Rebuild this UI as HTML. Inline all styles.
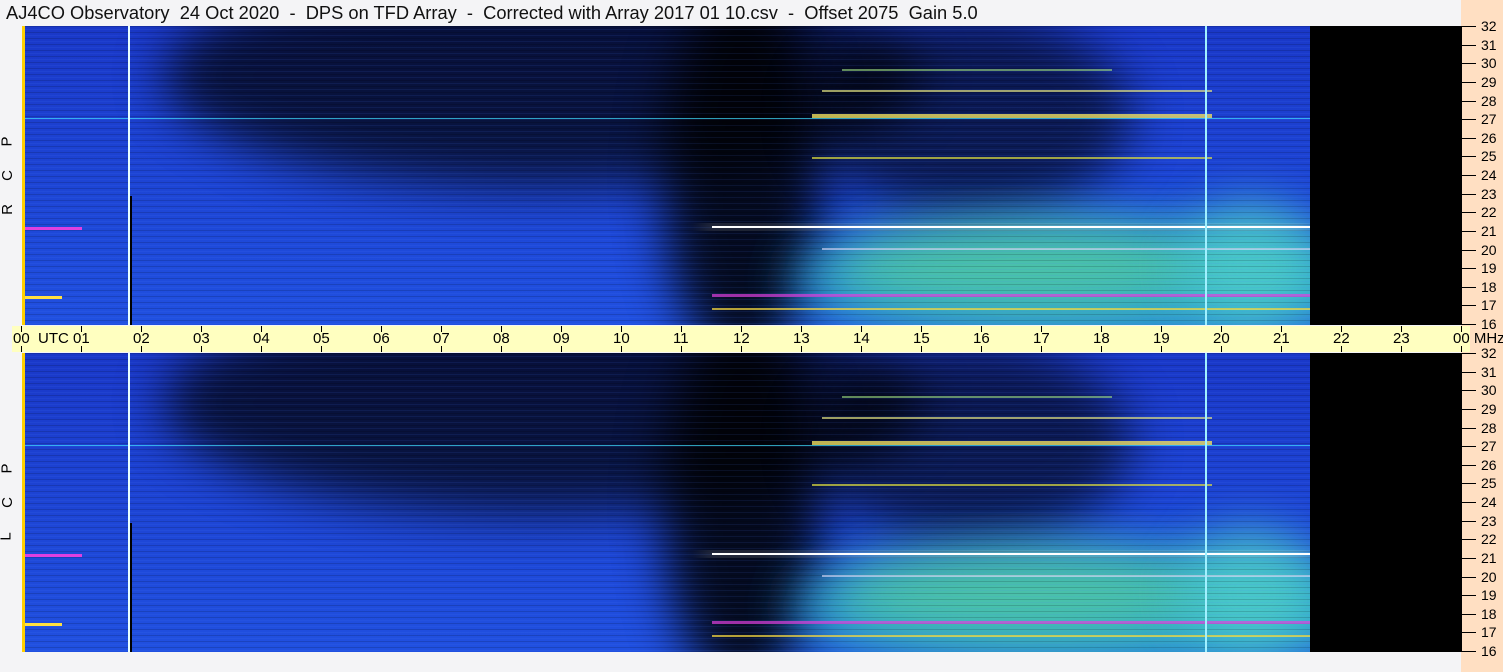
<!DOCTYPE html>
<html><head><meta charset="utf-8"><style>
body{margin:0;width:1503px;height:672px;background:#f4f4f6;position:relative;overflow:hidden;font-family:"Liberation Sans",sans-serif;}
.title{position:absolute;left:6px;top:2px;font-size:18.3px;color:#111;white-space:pre;}
.peach{position:absolute;left:1461px;top:0;width:42px;height:672px;background:#ffdfc2;}
.axis{position:absolute;left:12px;top:326px;width:1458px;height:26px;background:#ffffc0;}
.p{position:absolute;left:22px;width:1440px;height:299px;}
.lab{position:absolute;left:2px;font-size:15px;color:#000;transform:rotate(-90deg);}
.hl{position:absolute;font-size:15px;color:#000;top:330px;white-space:nowrap;}
.tk{position:absolute;width:1px;background:#000;}
.fl{position:absolute;left:1481px;font-size:14px;color:#000;}
.ft{position:absolute;left:1462px;width:14px;height:1px;background:#000;}
</style></head><body>
<div class="peach"></div>
<div class="title">AJ4CO Observatory  24 Oct 2020  -  DPS on TFD Array  -  Corrected with Array 2017 01 10.csv  -  Offset 2075  Gain 5.0</div>
<div class="axis"></div>
<svg width="0" height="0" style="position:absolute"><defs>
<filter id="b" x="-50%" y="-50%" width="200%" height="200%"><feGaussianBlur stdDeviation="25"/></filter>
<filter id="b2" x="-50%" y="-50%" width="200%" height="200%"><feGaussianBlur stdDeviation="8"/></filter>
<linearGradient id="g" x1="0" y1="0" x2="0" y2="1"><stop offset="0" stop-color="#1a38c8"/><stop offset="1" stop-color="#2050e0"/></linearGradient>
<pattern id="st" width="1440" height="6" patternUnits="userSpaceOnUse"><rect width="1440" height="1" fill="#000" opacity=".15"/><rect y="3" width="1440" height="1" fill="#5080ff" opacity=".1"/></pattern>
<symbol id="spec" viewBox="0 0 1440 299">
<rect width="1440" height="299" fill="url(#g)"/>
<ellipse cx="520" cy="50" rx="380" ry="110" fill="#000" opacity=".7" filter="url(#b)"/>
<ellipse cx="720" cy="150" rx="80" ry="190" fill="#000" opacity=".85" filter="url(#b)"/>
<ellipse cx="950" cy="90" rx="160" ry="100" fill="#000" opacity=".6" filter="url(#b)"/>
<ellipse cx="1070" cy="255" rx="300" ry="60" fill="#30b8c8" opacity=".85" filter="url(#b)"/>
<ellipse cx="1000" cy="240" rx="190" ry="40" fill="#60d890" opacity=".6" filter="url(#b)"/>
<ellipse cx="1230" cy="240" rx="70" ry="60" fill="#50d0c8" opacity=".8" filter="url(#b)"/>
<rect width="1440" height="299" fill="url(#st)"/>
<rect x="680" y="199" width="610" height="4" fill="#fff" filter="url(#b2)" opacity=".6"/>
<rect x="690" y="200" width="600" height="2" fill="#fff"/>
<rect x="0" y="201" width="60" height="3" fill="#e040e0"/>
<rect x="790" y="88" width="400" height="4" fill="#f0e060" opacity=".8"/>
<rect x="0" y="92" width="1288" height="1" fill="#40e0ff" opacity=".7"/>
<rect x="800" y="64" width="390" height="2" fill="#e0e080" opacity=".7"/>
<rect x="820" y="43" width="270" height="2" fill="#a0e080" opacity=".6"/>
<rect x="790" y="131" width="400" height="2" fill="#e0e040" opacity=".7"/>
<rect x="690" y="268" width="600" height="3" fill="#e040e0" opacity=".7"/>
<rect x="690" y="282" width="600" height="2" fill="#ffe040" opacity=".7"/>
<rect x="0" y="270" width="40" height="3" fill="#ffe040"/>
<rect x="800" y="222" width="490" height="2" fill="#e0e0ff" opacity=".6"/>
<rect x="0" y="0" width="3" height="299" fill="#ffd000"/>
<rect x="106" y="0" width="2" height="299" fill="#e8ffff"/>
<rect x="108" y="170" width="2" height="129" fill="#000"/>
<rect x="1183" y="0" width="2" height="299" fill="#a0f0ff"/>
<rect x="1288" y="0" width="152" height="299" fill="#000"/>
</symbol>
</defs></svg>
<svg class="p" style="top:26px" viewBox="0 0 1440 299" preserveAspectRatio="none"><use href="#spec"/></svg>
<svg class="p" style="top:353px" viewBox="0 0 1440 299" preserveAspectRatio="none"><use href="#spec"/></svg>
<div class="lab" style="top:133px">P</div><div class="lab" style="top:167px">C</div><div class="lab" style="top:201px">R</div>
<div class="lab" style="top:460px">P</div><div class="lab" style="top:494px">C</div><div class="lab" style="top:528px">L</div>
<div id="x"></div>
<script>
var h='';
var lbl=['00','01','02','03','04','05','06','07','08','09','10','11','12','13','14','15','16','17','18','19','20','21','22','23','00'];
for(var i=0;i<25;i++){var x=22+i*60;
h+='<div class="tk" style="left:'+(x-1)+'px;top:326px;height:6px"></div><div class="tk" style="left:'+(x-1)+'px;top:346px;height:6px"></div>';
var t=lbl[i];if(i==0)t='00&nbsp; UTC';if(i==24)t='00 MHz';
h+='<div class="hl" style="left:'+(x-9)+'px">'+t+'</div>';}
for(var p=0;p<2;p++){var tp=p?353:26;for(var f=32;f>=16;f--){var y=Math.round(tp+(32-f)*298/16);
h+='<div class="ft" style="top:'+y+'px"></div><div class="fl" style="top:'+(y-8)+'px">'+f+'</div>';}}
document.getElementById('x').innerHTML=h;
</script>
</body></html>
